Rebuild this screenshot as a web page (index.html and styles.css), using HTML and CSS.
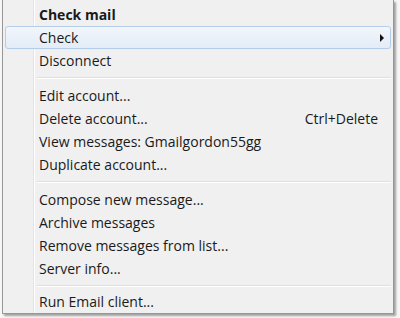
FILE: index.html
```html
<!DOCTYPE html>
<html lang="en">
<head>
  <meta charset="UTF-8">
  <title>Account menu</title>
  <link rel="stylesheet" href="styles.css">
</head>
<body>
  <div class="menu">
    <div class="item title">Check mail</div>
    <div class="item active">Check <span class="arrow"></span></div>
    <div class="item">Disconnect</div>
    <div class="sep"></div>
    <div class="item">Edit account...</div>
    <div class="item">Delete account... <span class="key">Ctrl+Delete</span></div>
    <div class="item">View messages: Gmailgordon55gg</div>
    <div class="item">Duplicate account...</div>
    <div class="sep"></div>
    <div class="item">Compose new message...</div>
    <div class="item">Archive messages</div>
    <div class="item">Remove messages from list...</div>
    <div class="item">Server info...</div>
    <div class="sep short"></div>
    <div class="item last">Run Email client...</div>
  </div>
</body>
</html>
```

FILE: styles.css
```css
body {
  margin: 0;
  width: 400px;
  height: 318px;
  overflow: hidden;
  background: #f6f6f6;
  font-family: "Open Sans", Arial, sans-serif;
}
.menu {
  position: relative;
  width: 392px;
  margin-left: 2px;
  padding: 3px 2px 1px 2px;
  box-sizing: border-box;
  background: #f0f0f0;
  border: 1px solid #979797;
  border-top: none;
  box-shadow: 2px 2px 2px rgba(0, 0, 0, 0.35);
}
/* gutter line */
.menu::before {
  content: "";
  position: absolute;
  top: 0;
  bottom: 0;
  left: 30px;
  width: 1px;
  background: #e2e3e3;
  border-right: 1px solid #fff;
}
.item {
  position: relative;
  display: flex;
  align-items: center;
  height: 23px;
  padding-left: 33px;
  padding-right: 12px;
  font-size: 14px;
  color: #1a1a1a;
  border: 1px solid transparent;
  border-radius: 3px;
  box-sizing: border-box;
}
.item.last {
  height: 22px;
}
.title {
  font-weight: bold;
}
.active {
  background: linear-gradient(#f2f6fb, #e3ecf7);
  border-color: #b4cde9;
}
.arrow {
  margin-left: auto;
  margin-right: -6px;
  width: 0;
  height: 0;
  border-top: 4px solid transparent;
  border-bottom: 4px solid transparent;
  border-left: 4px solid #111;
}
.key {
  margin-left: auto;
}
.sep {
  position: relative;
  height: 12px;
}
.sep.short {
  height: 10px;
}
.sep::after {
  content: "";
  position: absolute;
  left: 32px;
  right: 0;
  top: 5px;
  height: 1px;
  background: #e0e0e0;
  border-bottom: 1px solid #fff;
}
```
